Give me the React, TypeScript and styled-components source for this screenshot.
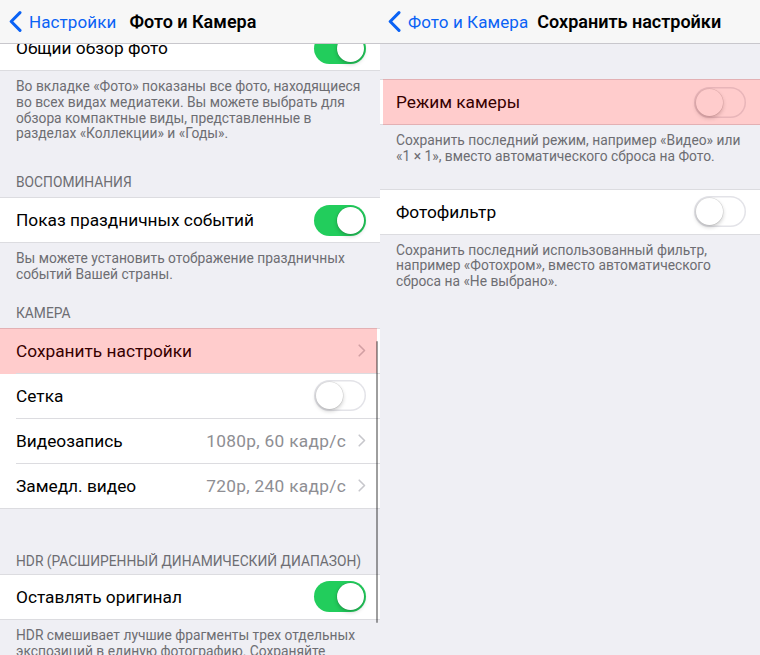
import React from "react";
import styled, { createGlobalStyle } from "styled-components";

const GlobalStyle = createGlobalStyle`
  html, body { margin: 0; padding: 0; background: #efeff4; }
  body {
    font-family: Roboto, "Noto Sans", "Liberation Sans", sans-serif;
    -webkit-font-smoothing: antialiased;
  }
  * { box-sizing: border-box; }
`;

const Screen = styled.div`
  display: flex;
  width: 760px;
  height: 655px;
  overflow: hidden;
  background: #efeff4;
`;

const Panel = styled.section`
  position: relative;
  width: 380px;
  height: 655px;
  display: flex;
  flex-direction: column;
  overflow: hidden;
`;

const NavBar = styled.header<{ $pad: number }>`
  position: relative;
  z-index: 2;
  flex: none;
  height: 44px;
  display: flex;
  align-items: center;
  padding-left: ${(p) => p.$pad}px;
  background: #f7f7f7;
  border-bottom: 1px solid #c8c7cc;
  font-size: 17px;
  white-space: nowrap;
`;

const Back = styled.div`
  display: flex;
  align-items: center;
  gap: 7px;
  color: #0a62f5;
  letter-spacing: 0.1px;
`;

const Title = styled.div<{ $gap: number }>`
  margin-left: ${(p) => p.$gap}px;
  font-size: 18px;
  font-weight: 600;
  color: #000;
`;

const Content = styled.div`
  flex: 1;
  overflow: hidden;
`;

const List = styled.div<{ $offset: number }>`
  margin-top: ${(p) => p.$offset}px;
  display: flex;
  flex-direction: column;
`;

const Group = styled.div`
  background: #fff;
  border-top: 1px solid #dcdce0;
  border-bottom: 1px solid #dcdce0;
`;

const Row = styled.div<{ $hl?: "left" | "right" }>`
  position: relative;
  display: flex;
  padding-left: 16px;
  font-size: 17.3px;
  color: #000;

  ${(p) =>
    p.$hl
      ? `&::after {
          content: "";
          position: absolute;
          top: -1px;
          bottom: -1px;
          left: ${p.$hl === "right" ? 3 : 0}px;
          right: ${p.$hl === "left" ? 3 : 0}px;
          background: rgba(255, 0, 0, 0.2);
          pointer-events: none;
        }`
      : ""}
`;

const RowInner = styled.div<{ $first?: boolean }>`
  flex: 1;
  height: ${(p) => (p.$first ? 44 : 45)}px;
  display: flex;
  align-items: center;
  padding-right: 14px;
  border-top: ${(p) => (p.$first ? "none" : "1px solid #dcdce0")};
`;

const Label = styled.span`
  flex: 1;
  white-space: nowrap;
`;

const Value = styled.span`
  color: #8e8e93;
  white-space: nowrap;
  margin-right: 12px;
  letter-spacing: 0.3px;
`;

const Toggle = styled.span<{ $on?: boolean }>`
  flex: none;
  width: 52px;
  height: 31px;
  border-radius: 16px;
  padding: 2px;
  display: flex;
  justify-content: ${(p) => (p.$on ? "flex-end" : "flex-start")};
  background: ${(p) => (p.$on ? "#22cd5c" : "#fff")};
  box-shadow: ${(p) => (p.$on ? "none" : "inset 0 0 0 1.5px #e3e3e8")};
`;

const Knob = styled.span`
  width: 27px;
  height: 27px;
  border-radius: 50%;
  background: #fff;
  box-shadow: 0 2px 4px rgba(0, 0, 0, 0.22), 0 0 0 0.5px rgba(0, 0, 0, 0.12);
`;

const Footer = styled.div`
  padding: 8px 16px 0;
  font-size: 13.8px;
  line-height: 15.8px;
  color: #6d6d72;
  white-space: pre-line;
`;

const Header = styled.div<{ $mt: number; $pb?: number }>`
  margin-top: ${(p) => p.$mt}px;
  padding: 0 16px ${(p) => p.$pb ?? 7}px;
  font-size: 13.8px;
  line-height: 16px;
  color: #6d6d72;
  text-transform: uppercase;
  white-space: nowrap;
`;

const Spacer = styled.div<{ $h: number }>`
  height: ${(p) => p.$h}px;
  flex: none;
`;

const ScrollBar = styled.div`
  position: absolute;
  right: 2px;
  top: 341px;
  width: 2.5px;
  height: 282px;
  border-radius: 2px;
  background: rgba(0, 0, 0, 0.38);
  z-index: 3;
`;

const BackChevron = () => (
  <svg width="13" height="21" viewBox="0 0 13 21" fill="none">
    <path d="M11 1.6 L2.2 10.5 L11 19.4" stroke="#0a62f5" strokeWidth="3" strokeLinecap="round" strokeLinejoin="round" />
  </svg>
);

const Disclosure = () => (
  <svg width="8" height="13" viewBox="0 0 8 13" fill="none">
    <path d="M1.2 1.2 L6.5 6.5 L1.2 11.8" stroke="#c7c7cc" strokeWidth="1.6" strokeLinecap="round" strokeLinejoin="round" />
  </svg>
);

type Item = {
  label: string;
  toggle?: boolean;
  value?: string;
  chevron?: boolean;
  hl?: "left" | "right";
};

const Cells = ({ items }: { items: Item[] }) => (
  <Group>
    {items.map((it, i) => (
      <Row key={it.label} $hl={it.hl}>
        <RowInner $first={i === 0}>
          <Label>{it.label}</Label>
          {it.value && <Value>{it.value}</Value>}
          {it.chevron && <Disclosure />}
          {it.toggle !== undefined && (
            <Toggle $on={it.toggle}>
              <Knob />
            </Toggle>
          )}
        </RowInner>
      </Row>
    ))}
  </Group>
);

export default function App() {
  return (
    <>
      <GlobalStyle />
      <Screen>
        <Panel>
          <NavBar $pad={9}>
            <Back>
              <BackChevron />
              <span>Настройки</span>
            </Back>
            <Title $gap={13}>Фото и Камера</Title>
          </NavBar>
          <Content>
            <List $offset={-19}>
              <Cells items={[{ label: "Общий обзор фото", toggle: true }]} />
              <Footer>
                {"Во вкладке «Фото» показаны все фото, находящиеся\nво всех видах медиатеки. Вы можете выбрать для\nобзора компактные виды, представленные в\nразделах «Коллекции» и «Годы»."}
              </Footer>
              <Header $mt={32}>Воспоминания</Header>
              <Cells items={[{ label: "Показ праздничных событий", toggle: true }]} />
              <Footer>
                {"Вы можете установить отображение праздничных\nсобытий Вашей страны."}
              </Footer>
              <Header $mt={22}>Камера</Header>
              <Cells
                items={[
                  { label: "Сохранить настройки", chevron: true, hl: "left" },
                  { label: "Сетка", toggle: false },
                  { label: "Видеозапись", value: "1080p, 60 кадр/с", chevron: true },
                  { label: "Замедл. видео", value: "720p, 240 кадр/с", chevron: true },
                ]}
              />
              <Header $mt={44} $pb={5}>HDR (Расширенный динамический диапазон)</Header>
              <Cells items={[{ label: "Оставлять оригинал", toggle: true }]} />
              <Footer>
                {"HDR смешивает лучшие фрагменты трех отдельных\nэкспозиций в единую фотографию. Сохраняйте"}
              </Footer>
            </List>
          </Content>
          <ScrollBar />
        </Panel>
        <Panel>
          <NavBar $pad={8}>
            <Back>
              <BackChevron />
              <span>Фото и Камера</span>
            </Back>
            <Title $gap={9}>Сохранить настройки</Title>
          </NavBar>
          <Content>
            <List $offset={0}>
              <Spacer $h={35} />
              <Cells items={[{ label: "Режим камеры", toggle: false, hl: "right" }]} />
              <Footer>
                {"Сохранить последний режим, например «Видео» или\n«1 × 1», вместо автоматического сброса на Фото."}
              </Footer>
              <Spacer $h={24} />
              <Cells items={[{ label: "Фотофильтр", toggle: false }]} />
              <Footer>
                {"Сохранить последний использованный фильтр,\nнапример «Фотохром», вместо автоматического\nсброса на «Не выбрано»."}
              </Footer>
            </List>
          </Content>
        </Panel>
      </Screen>
    </>
  );
}
